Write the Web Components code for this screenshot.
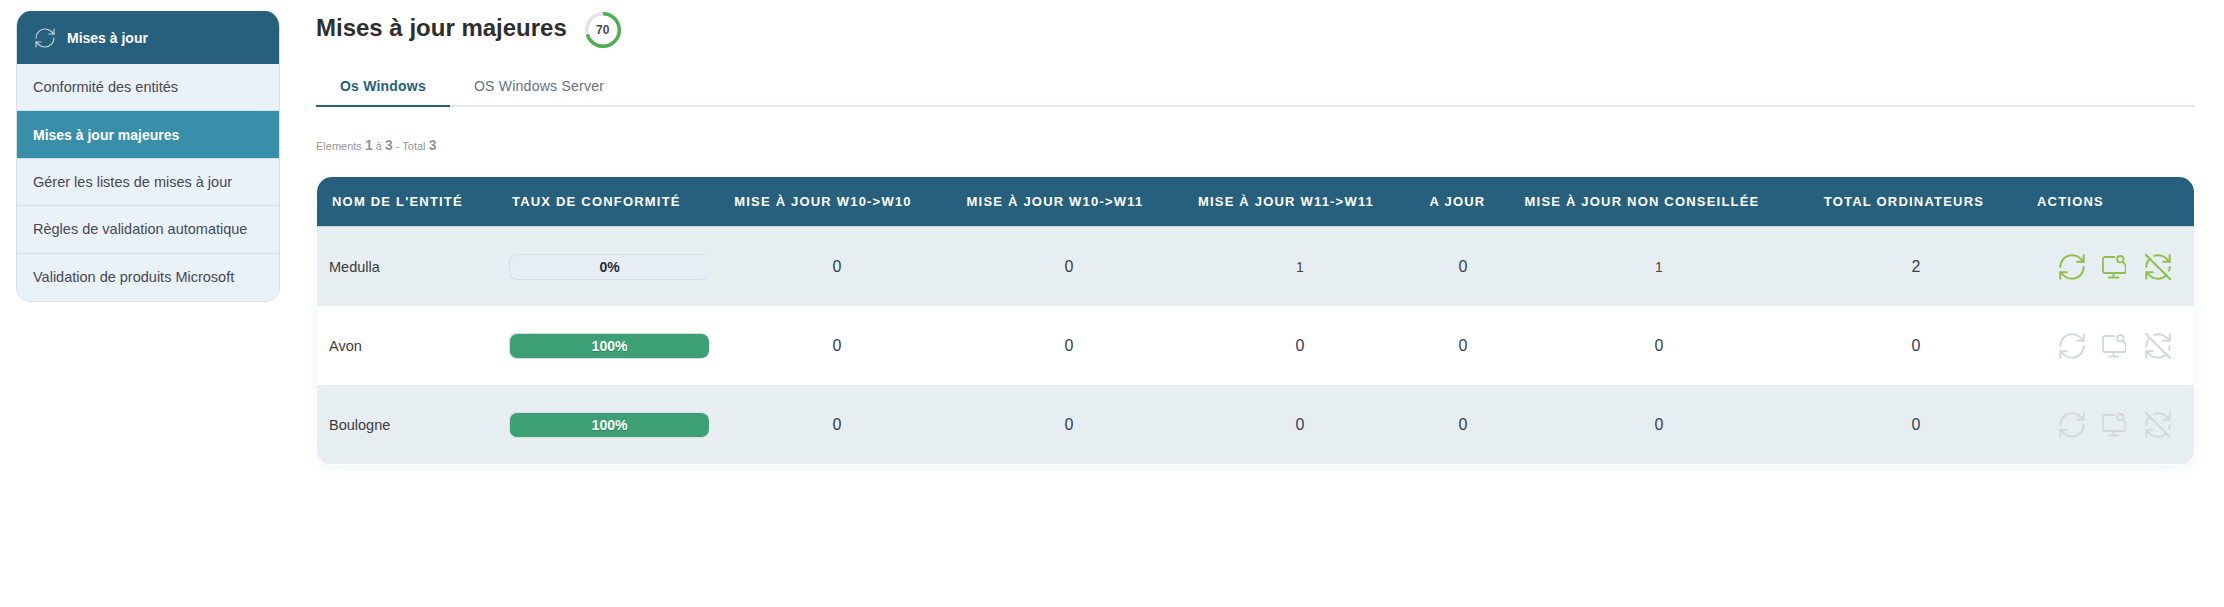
<!DOCTYPE html>
<html lang="fr"><head><meta charset="utf-8"><title>Mises à jour majeures</title>
<style>
html,body{margin:0;padding:0;background:#fff;font-family:"Liberation Sans",Arial,sans-serif;color:#333}
body{width:2224px;height:607px;overflow:hidden}
</style></head><body>
<app-shell>
  <side-menu slot="side" title-text="Mises à jour">
    <side-item>Conformité des entités</side-item>
    <side-item active>Mises à jour majeures</side-item>
    <side-item>Gérer les listes de mises à jour</side-item>
    <side-item>Règles de validation automatique</side-item>
    <side-item last>Validation de produits Microsoft</side-item>
  </side-menu>
  <page-title text="Mises à jour majeures" score="70"></page-title>
  <tab-bar>
    <tab-item active>Os Windows</tab-item>
    <tab-item>OS Windows Server</tab-item>
  </tab-bar>
  <page-count></page-count>
  <entity-table>
    <entity-row name="Medulla" rate="0" values="0,0,1,0,1,2" active></entity-row>
    <entity-row name="Avon" rate="100" values="0,0,0,0,0,0" white></entity-row>
    <entity-row name="Boulogne" rate="100" values="0,0,0,0,0,0" last></entity-row>
  </entity-table>
</app-shell>
<script>
const COLS='183px 210px 254px 210px 252px 74px 318px 196px 180px';
function def(name,html){
  customElements.define(name,class extends HTMLElement{
    connectedCallback(){
      if(this.shadowRoot)return;
      const r=this.attachShadow({mode:'open'});
      r.innerHTML=typeof html==='function'?html(this):html;
    }
  });
}
const syncPath=`<path d="M3 12a9 9 0 0 1 9-9 9.75 9.75 0 0 1 6.74 2.74L21 8"/><path d="M21 3v5h-5"/><path d="M21 12a9 9 0 0 1-9 9 9.75 9.75 0 0 1-6.74-2.74L3 16"/><path d="M8 16H3v5"/>`;
const attrs=`fill="none" stroke="currentColor" stroke-linecap="round" stroke-linejoin="round"`;
const icoSync=`<svg viewBox="2 2 20 20" width="26" height="26" ${attrs} stroke-width="1.55">${syncPath}</svg>`;
const icoMon=`<svg viewBox="0 0 24 24" width="24" height="24" ${attrs} stroke-width="1.8"><path d="M12.500 2H3A2 2 0 0 0 1 4V16A2 2 0 0 0 3 18H21.700A2 2 0 0 0 23.700 16V10"/><path d="M11.500 18V22"/><path d="M7 22.500H16.500"/><circle cx="18.300" cy="4.200" r="3.200"/><path d="M20.600 6.600L23.700 10"/></svg>`;
const icoNo=`<svg viewBox="2 2 20 20" width="26" height="26" ${attrs} stroke-width="1.55"><path d="M21 8L18.740 5.740A9.750 9.750 0 0 0 12 3C11 3 10.030 3.160 9.130 3.470"/><path d="M8 16H3v5"/><path d="M3 12C3 9.510 4 7.260 5.640 5.640"/><path d="m3 16 2.260 2.260A9.750 9.750 0 0 0 12 21c2.490 0 4.740-1 6.360-2.640"/><path d="M21 12c0 1-.16 1.970-.47 2.870"/><path d="M21 3v5h-5"/><path d="M22 22 2 2"/></svg>`;

def('app-shell',`<style>
:host{display:grid;grid-template-columns:264px 1879px;column-gap:36px;padding:11px 0 0 16px;box-sizing:border-box;width:2224px}
.main{display:flex;flex-direction:column;min-width:0}
</style><slot name="side"></slot><div class="main"><slot></slot></div>`);

def('side-menu',h=>`<style>
:host{display:block;align-self:start;border-radius:15px;overflow:hidden;background:#e9f2f8;border:1px solid #d3e0ea;border-top:0;box-sizing:border-box;width:264px}
header{height:53px;margin:0 -1px;background:#27607d;color:#fff;font:bold 14px "Liberation Sans",Arial,sans-serif;display:flex;align-items:center;gap:12px;padding-left:19px}
svg{width:20px;height:20px;color:#c9d5dc}
</style><header><svg viewBox="2 2 20 20" ${attrs} stroke-width="1.100">${syncPath}</svg><span>${h.getAttribute('title-text')}</span></header><slot></slot>`);

def('side-item',h=>`<style>
:host{display:flex;align-items:center;height:47.400px;box-sizing:border-box;padding:0 0 0 16px;font:14.500px "Liberation Sans",Arial,sans-serif;color:#474754;border-bottom:1px solid #d3e0ea;background:#e9f2f8}
:host([active]){background:#398ea9;color:#fff;font-weight:bold;font-size:14px}
:host([last]){border-bottom:0}
</style><slot></slot>`);

def('page-title',h=>`<style>
:host{display:flex;align-items:center;height:37px;gap:18px;color:#2e2e2e}
h1{margin:0;font:bold 24px "Liberation Sans",Arial,sans-serif;position:relative;top:-2px}
</style><h1>${h.getAttribute('text')}</h1><score-ring value="${h.getAttribute('score')}"></score-ring>`);

def('score-ring',h=>{const v=+h.getAttribute('value'),R=16.300,c=2*Math.PI*R;return `<style>
:host{display:grid;place-items:center;width:36px;height:36px;font:bold 12px "Liberation Sans",sans-serif;color:#4a4a55}
svg,span{grid-area:1/1}
</style><svg width="36" height="36" viewBox="0 0 36 36" fill="none"><circle cx="18" cy="18" r="${R}" stroke="#e3e3e3" stroke-width="3.400"/><circle cx="18" cy="18" r="${R}" stroke="#4cae4f" stroke-width="3.400" stroke-dasharray="${c*v/100} ${c}" transform="rotate(-90 18 18)"/></svg><span>${v}</span>`});

def('tab-bar',`<style>
:host{display:flex;margin-top:21px;height:38px;box-sizing:border-box;border-bottom:2px solid #e1e7f0}
</style><slot></slot>`);
def('tab-item',h=>`<style>
:host{display:flex;align-items:center;justify-content:center;height:38px;box-sizing:border-box;padding:0 24px 4px;font:14px "Liberation Sans",Arial,sans-serif;color:#5f7284;letter-spacing:.25px}
:host([active]){font-weight:bold;color:#27607d;border-bottom:2px solid #27607d;letter-spacing:.2px;padding-bottom:2px}
</style><slot></slot>`);

def('page-count',`<style>
:host{display:block;margin-top:29px;height:18px;font:11px/18px "Liberation Sans",Arial,sans-serif;color:#969696;margin-bottom:23px}
b{font-size:14px}
</style>Elements <b>1</b> à <b>3</b> - Total <b>3</b>`);

def('entity-table',`<style>
:host{display:block;border-radius:15px;box-shadow:0 3px 12px rgba(40,60,80,.06);overflow:hidden;background:#fff;margin-left:1px;width:1877px;padding-bottom:1px}
.head{display:grid;grid-template-columns:${COLS};height:50px;align-items:center;background:#27607d;color:#fff;font:bold 13px "Liberation Sans",Arial,sans-serif;letter-spacing:1.200px;text-align:center;border-bottom:1px solid #c9d3da;box-sizing:border-box}
.head span{white-space:nowrap}
.head .l{text-align:left;padding-left:15px}
.head .t{text-align:left;padding-left:12px}
.head .a{text-align:left;padding-left:23px}
</style><div class="head"><span class="l">NOM DE L'ENTITÉ</span><span class="t">TAUX DE CONFORMITÉ</span><span style="padding-right:28px">MISE À JOUR W10-&gt;W10</span><span style="padding-right:28px">MISE À JOUR W10-&gt;W11</span><span style="padding-right:28px">MISE À JOUR W11-&gt;W11</span><span style="padding-right:11px">A JOUR</span><span style="padding-right:34px">MISE À JOUR NON CONSEILLÉE</span><span style="padding-right:24px">TOTAL ORDINATEURS</span><span class="a">ACTIONS</span></div><slot></slot>`);

def('entity-row',h=>{
 const vals=h.getAttribute('values').split(',');
 return `<style>
:host{display:grid;grid-template-columns:${COLS};height:79px;align-items:center;background:#e7eef2;font:14.500px "Liberation Sans",Arial,sans-serif;color:#3b3b3b;box-sizing:border-box}
:host([white]){background:#fff}
.n{padding-left:12px}
.c{text-align:center;font-size:16px;color:#34414f}
.c.s{font-size:14px;color:#4a4540}
.p{padding-left:9px}
</style><span class="n">${h.getAttribute('name')}</span><span class="p"><rate-bar value="${h.getAttribute('rate')}"></rate-bar></span>${vals.map(v=>`<span class="c ${v==='1'?'s':''}">${v}</span>`).join('')}<row-actions ${h.hasAttribute('active')?'active':''}></row-actions>`});

def('rate-bar',h=>{const v=+h.getAttribute('value');return `<style>
:host{display:flex;align-items:center;justify-content:center;width:200px;height:26px;box-sizing:border-box;border:1px solid #d5dde6;border-right:0;border-radius:8px;background:${v?'#3ca074':'#e6edf4'};color:${v?'#fff':'#2b2b33'};font:bold 14px "Liberation Sans",Arial,sans-serif;${v?'text-shadow:0 1px 1px rgba(0,0,0,.2)':''}}
</style>${v}%`});

def('row-actions',h=>`<style>
:host{display:flex;align-items:center;padding-left:45px;color:#d4d8da}
:host([active]){color:#8fc04c}
svg{display:block}
.a{margin-right:17px}
.b{margin-right:19px}
</style><span class="a">${icoSync}</span><span class="b">${icoMon}</span><span>${icoNo}</span>`);
</script>
</body></html>
